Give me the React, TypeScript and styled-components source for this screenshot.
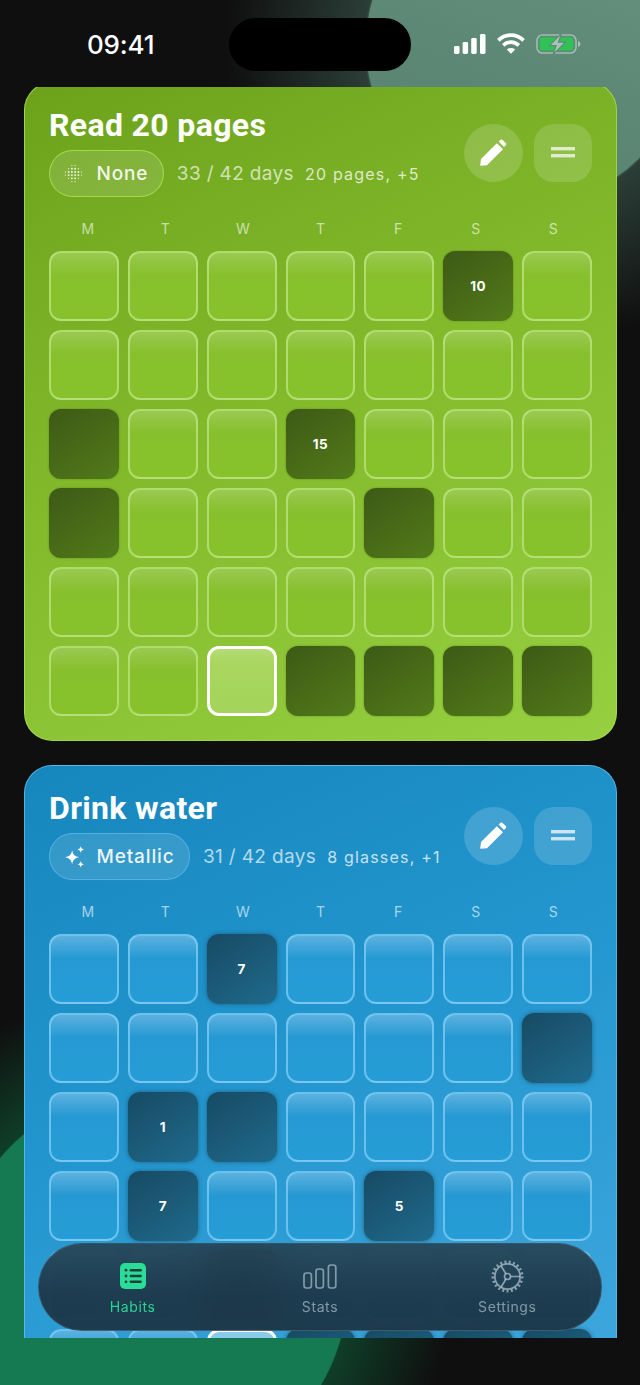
import React from "react";
import styled, { createGlobalStyle } from "styled-components";

const Global = createGlobalStyle`
  html, body { margin: 0; padding: 0; background: #0f0f0f; }
  body { font-family: Inter, "Liberation Sans", sans-serif; overflow: hidden; }
`;

const Screen = styled.div`
  position: relative;
  width: 640px;
  height: 1385px;
  overflow: hidden;
  background:
    radial-gradient(circle 300px at 526px 45px, rgba(85, 125, 108, 0.8) 0 53%, rgba(65, 100, 87, 0.55) 54%, rgba(15, 15, 15, 0) 100%),
    radial-gradient(circle 300px at 151px 1285px, #157a52 0 65.5%, rgba(15, 80, 50, 0.72) 66%, rgba(15, 15, 15, 0) 100%),
    #0f0f0f;
`;

const TealDisc = styled.div`
  position: absolute;
  left: 366px;
  top: -115px;
  width: 320px;
  height: 320px;
  border-radius: 50%;
  background: linear-gradient(200deg, #6b9583 0%, #5c8775 60%, #5a8271 100%);
`;

const StatusBar = styled.header`
  position: relative;
  height: 87px;
  display: grid;
  grid-template-columns: 229px 182px 229px;
  color: #fff;
`;

const Time = styled.div`
  padding: 29px 0 0 87px;
  font-size: 26px;
  line-height: 31px;
  font-weight: 500;
  letter-spacing: -0.2px;
`;

const Island = styled.div`
  margin-top: 18px;
  height: 53px;
  border-radius: 27px;
  background: #000;
`;

const StatusIcons = styled.div`
  display: flex;
  align-items: center;
  gap: 11px;
  padding: 33px 0 0 43px;
  height: 21px;
`;

const Scroller = styled.main`
  position: relative;
  width: 593px;
  height: 1251px;
  margin-left: 24px;
  overflow: hidden;
`;

const Card = styled.section<{ $tone: "green" | "blue" }>`
  box-sizing: border-box;
  width: 593px;
  height: 659px;
  margin-bottom: 24px;
  padding: 25px 24px 24px;
  border-radius: 28px;
  border: 1px solid ${(p) => (p.$tone === "green" ? "rgba(175, 225, 90, 0.75)" : "rgba(100, 190, 240, 0.75)")};
  background: ${(p) =>
    p.$tone === "green"
      ? "linear-gradient(155deg, #6ca21b 0%, #82b92b 45%, #96d040 100%)"
      : "linear-gradient(155deg, #1687bd 0%, #2396cf 45%, #41a9df 100%)"};
  &:first-child { margin-top: -5px; }
`;

const CardHead = styled.div`
  display: flex;
  justify-content: space-between;
  align-items: center;
`;

const Title = styled.h2`
  margin: 0 0 8px;
  font-family: Roboto, Inter, sans-serif;
  font-size: 32px;
  line-height: 34px;
  font-weight: 700;
  letter-spacing: 0.35px;
  color: #fff;
`;

const MetaRow = styled.div`
  display: flex;
  align-items: center;
`;

const Pill = styled.div<{ $tone: "green" | "blue" }>`
  box-sizing: border-box;
  height: 47px;
  display: flex;
  align-items: center;
  gap: 14px;
  padding: 0 14.5px 0 13.5px;
  border-radius: 24px;
  color: rgba(255, 255, 255, 0.92);
  font-size: 19px;
  font-weight: 500;
  letter-spacing: 0.85px;
  background: rgba(255, 255, 255, 0.12);
  border: 1.5px solid ${(p) => (p.$tone === "green" ? "rgba(170, 225, 80, 0.85)" : "rgba(100, 190, 240, 0.65)")};
`;

const PillIcon = styled.span`
  width: 19px;
  height: 23px;
  display: flex;
  align-items: center;
  svg { overflow: visible; flex: none; }
`;

const Days = styled.span`
  margin-left: 13px;
  font-size: 19px;
  letter-spacing: 0.35px;
  color: rgba(255, 255, 255, 0.68);
`;

const Goal = styled.span`
  margin-left: 11px;
  font-size: 16px;
  letter-spacing: 1.2px;
  color: rgba(255, 255, 255, 0.75);
`;

const Actions = styled.div`
  display: flex;
  gap: 11px;
`;

const RoundButton = styled.button<{ $round?: boolean }>`
  width: 58.5px;
  height: 58px;
  padding: 0;
  border: 0;
  border-radius: ${(p) => (p.$round ? "50%" : "20px")};
  background: rgba(255, 255, 255, ${(p) => (p.$round ? 0.16 : 0.15)});
  display: flex;
  align-items: center;
  justify-content: center;
`;

const Weekdays = styled.div`
  display: grid;
  grid-template-columns: repeat(7, 1fr);
  margin: 23px 0 13px;
  text-align: center;
  font-size: 14px;
  line-height: 18px;
  color: rgba(255, 255, 255, 0.62);
`;

const Grid = styled.div`
  display: grid;
  grid-template-columns: repeat(7, 1fr);
  gap: 9px;
`;

const Cell = styled.div<{ $tone: "green" | "blue"; $state: "empty" | "done" | "today" }>`
  box-sizing: border-box;
  height: 70px;
  border-radius: 12px;
  display: flex;
  align-items: center;
  justify-content: center;
  color: #fff;
  font-size: 13.5px;
  font-weight: 700;
  letter-spacing: 0.4px;
  ${(p) => {
    if (p.$state === "done") {
      return p.$tone === "green"
        ? `background: linear-gradient(145deg, #3d5a15, #527a1a); box-shadow: 0 0 2px rgba(61, 90, 21, 0.5);`
        : `background: linear-gradient(145deg, #174a63, #1f6a8c); box-shadow: 0 0 4px rgba(23, 74, 99, 0.7);`;
    }
    if (p.$state === "today") {
      return `border: 3px solid #fff; background: ${
        p.$tone === "green"
          ? "linear-gradient(180deg, #b4dc74 0%, #a8d65e 25%, #a4d45a 100%)"
          : "linear-gradient(180deg, #8ccbe9 0%, #72c0e6 100%)"
      };`;
    }
    return p.$tone === "green"
      ? `border: 2px solid rgba(200, 238, 145, 0.62); background: linear-gradient(180deg, #9bc952 0%, #92c542 14%, #87c02c 34%, #87c22c 100%);`
      : `border: 2px solid rgba(135, 210, 248, 0.7); background: linear-gradient(180deg, #5cb2df 0%, #45a7da 14%, #2599d3 34%, #269dd6 100%);`;
  }}
`;

const Nav = styled.nav`
  position: absolute;
  left: 38px;
  top: 1243px;
  box-sizing: border-box;
  width: 564px;
  height: 88px;
  border-radius: 44px;
  display: grid;
  grid-template-columns: repeat(3, 1fr);
  background: linear-gradient(180deg, rgba(38, 66, 82, 0.9) 0%, rgba(28, 52, 68, 0.92) 60%, rgba(28, 50, 66, 0.92) 100%);
  backdrop-filter: blur(24px);
  border: 1px solid rgba(255, 255, 255, 0.12);
`;

const NavItem = styled.div<{ $active?: boolean }>`
  display: flex;
  flex-direction: column;
  align-items: center;
  justify-content: flex-start;
  font-size: 14px;
  line-height: 18px;
  letter-spacing: 0.6px;
  color: ${(p) => (p.$active ? "#2bd495" : "rgba(190, 210, 220, 0.62)")};
`;

const NavIcon = styled.div`
  height: 34px;
  margin: 15px 0 5px;
  display: flex;
  align-items: center;
  justify-content: center;
`;

const Signal = () => (
  <svg width="32" height="20" viewBox="0 0 32 20" fill="#fff">
    <rect x="0" y="12" width="5.5" height="8" rx="1.4" />
    <rect x="8.6" y="8" width="5.5" height="12" rx="1.4" />
    <rect x="17.2" y="4" width="5.5" height="16" rx="1.4" />
    <rect x="26" y="0" width="5.5" height="20" rx="1.4" />
  </svg>
);

const Wifi = () => (
  <svg width="28" height="21" viewBox="0 0 28 21" fill="none" stroke="#fff" strokeWidth="3.6">
    <path d="M1.4 7.4C8.6 .4 19.4 .4 26.6 7.4" />
    <path d="M6.2 12.4C10.7 8 17.3 8 21.8 12.4" />
    <path d="M14 20.8 9.8 16.4C12.2 14.4 15.8 14.4 18.2 16.4Z" fill="#fff" stroke="none" />
  </svg>
);

const Battery = () => (
  <svg width="45" height="22" viewBox="0 0 45 22" fill="none">
    <rect x="1" y="2" width="39" height="18" rx="5.5" stroke="rgba(255,255,255,.42)" strokeWidth="1.6" />
    <rect x="3.6" y="4.6" width="33.8" height="12.8" rx="3" fill="#30c254" />
    <path d="M42 8c1.6.4 2.4 1.6 2.4 3s-.8 2.6-2.4 3z" fill="rgba(255,255,255,.45)" />
    <path d="M25.5 .4 13.5 12.6h6.6L17 21.6 29.5 9.2h-7z" fill="#a9c4b6" stroke="#5f8a78" strokeWidth="1.2" />
  </svg>
);

const Pencil = () => (
  <svg width="28" height="28" viewBox="0 0 28 28" fill="#fff">
    <path d="M1.2 26.8 2 20 17.8 4.2 24 10.2 8 26.2Z" />
    <path d="M19.6 2.6 21.4.9c.6-.6 1.5-.6 2.1 0l3.3 3.2c.6.6.6 1.5 0 2.1l-1.8 1.8z" />
  </svg>
);

const Bars = () => (
  <svg width="24" height="11" viewBox="0 0 24 11" fill="rgba(255,255,255,.72)">
    <rect y="0" width="24" height="3.4" />
    <rect y="7" width="24" height="3.4" />
  </svg>
);

const Dots = () => (
  <svg width="19" height="19" viewBox="0 0 20 20" fill="rgba(255,255,255,.9)">
    {Array.from({ length: 36 }).map((_, i) => {
      const x = (i % 6) * 3.4 + 1.5;
      const y = Math.floor(i / 6) * 3.4 + 1.5;
      const d = Math.hypot(x - 10, y - 10);
      if (d > 9.5) return null;
      return <circle key={i} cx={x} cy={y} r={d > 7 ? 0.6 : 1} />;
    })}
  </svg>
);

const Sparkles = () => (
  <svg width="22" height="22" viewBox="0 0 23 23" fill="#fff">
    <path d="M8.5 4.5C9.4 9.2 11.2 11 16 11.7 11.2 12.6 9.4 14.4 8.5 19 7.6 14.4 5.8 12.6 1 11.7 5.8 11 7.6 9.2 8.5 4.5Z" />
    <path d="M17.5 0C18 2.4 18.8 3.1 21 3.6 18.8 4.1 18 4.9 17.5 7.2 17 4.9 16.2 4.1 14 3.6 16.2 3.1 17 2.4 17.5 0Z" />
    <path d="M17.5 15.6C18 17.8 18.8 18.6 21 19.1 18.8 19.6 18 20.4 17.5 22.6 17 20.4 16.2 19.6 14 19.1 16.2 18.6 17 17.8 17.5 15.6Z" />
  </svg>
);

const HabitsIcon = () => (
  <svg width="26" height="26" viewBox="0 0 26 26">
    <rect width="26" height="26" rx="5" fill="#2bdc98" />
    <g fill="#14403a">
      <circle cx="6" cy="7.2" r="1.4" />
      <circle cx="6" cy="13" r="1.4" />
      <circle cx="6" cy="18.8" r="1.4" />
      <rect x="9.6" y="6" width="12.2" height="2.4" rx="1.2" />
      <rect x="9.6" y="11.8" width="12.2" height="2.4" rx="1.2" />
      <rect x="9.6" y="17.6" width="12.2" height="2.4" rx="1.2" />
    </g>
  </svg>
);

const StatsIcon = () => (
  <svg width="34" height="25" viewBox="0 0 34 25" fill="none" stroke="rgba(190,210,220,.62)" strokeWidth="1.7">
    <rect x="1" y="9" width="7.4" height="15" rx="2.4" />
    <rect x="13" y="5" width="7.4" height="19" rx="2.4" />
    <rect x="25.4" y="1" width="7.4" height="23" rx="2.4" />
  </svg>
);

const SettingsIcon = () => (
  <svg width="33" height="33" viewBox="0 0 33 33" fill="none" stroke="rgba(190,210,220,.66)">
    <circle cx="16.5" cy="16.5" r="14.6" strokeWidth="2.8" strokeDasharray="2 2.35" />
    <circle cx="16.5" cy="16.5" r="12.6" strokeWidth="1.7" />
    <circle cx="16.5" cy="16.5" r="3" strokeWidth="1.7" />
    <path d="M19.5 16.5H29M15 19 10 27.3M15 14 10 5.7" strokeWidth="1.7" />
  </svg>
);

type Mark = number | "done" | "today" | null;
const greenRows: Mark[][] = [
  [null, null, null, null, null, 10, null],
  [null, null, null, null, null, null, null],
  ["done", null, null, 15, null, null, null],
  ["done", null, null, null, "done", null, null],
  [null, null, null, null, null, null, null],
  [null, null, "today", "done", "done", "done", "done"],
];
const blueRows: Mark[][] = [
  [null, null, 7, null, null, null, null],
  [null, null, null, null, null, null, "done"],
  [null, 1, "done", null, null, null, null],
  [null, 7, null, null, 5, null, null],
  [null, null, "done", null, null, null, null],
  [null, null, "today", "done", "done", "done", "done"],
];

const days = ["M", "T", "W", "T", "F", "S", "S"];

type HabitProps = {
  tone: "green" | "blue";
  title: string;
  pill: string;
  icon: React.ReactNode;
  count: string;
  goal: string;
  rows: Mark[][];
};

const Habit = ({ tone, title, pill, icon, count, goal, rows }: HabitProps) => (
  <Card $tone={tone}>
    <CardHead>
      <div>
        <Title>{title}</Title>
        <MetaRow>
          <Pill $tone={tone}>
            <PillIcon>{icon}</PillIcon>
            {pill}
          </Pill>
          <Days>{count}</Days>
          <Goal>{goal}</Goal>
        </MetaRow>
      </div>
      <Actions>
        <RoundButton $round>
          <Pencil />
        </RoundButton>
        <RoundButton>
          <Bars />
        </RoundButton>
      </Actions>
    </CardHead>
    <Weekdays>
      {days.map((d, i) => (
        <span key={i}>{d}</span>
      ))}
    </Weekdays>
    <Grid>
      {rows.flat().map((m, i) => (
        <Cell
          key={i}
          $tone={tone}
          $state={m === null ? "empty" : m === "today" ? "today" : "done"}
        >
          {typeof m === "number" ? m : null}
        </Cell>
      ))}
    </Grid>
  </Card>
);

export default function App() {
  return (
    <Screen>
      <Global />
      <TealDisc />
      <StatusBar>
        <Time>09:41</Time>
        <Island />
        <StatusIcons>
          <Signal />
          <Wifi />
          <Battery />
        </StatusIcons>
      </StatusBar>
      <Scroller>
        <Habit
          tone="green"
          title="Read 20 pages"
          pill="None"
          icon={<Dots />}
          count="33 / 42 days"
          goal="20 pages, +5"
          rows={greenRows}
        />
        <Habit
          tone="blue"
          title="Drink water"
          pill="Metallic"
          icon={<Sparkles />}
          count="31 / 42 days"
          goal="8 glasses, +1"
          rows={blueRows}
        />
      </Scroller>
      <Nav>
        <NavItem $active>
          <NavIcon>
            <HabitsIcon />
          </NavIcon>
          Habits
        </NavItem>
        <NavItem>
          <NavIcon>
            <StatsIcon />
          </NavIcon>
          Stats
        </NavItem>
        <NavItem>
          <NavIcon>
            <SettingsIcon />
          </NavIcon>
          Settings
        </NavItem>
      </Nav>
    </Screen>
  );
}
